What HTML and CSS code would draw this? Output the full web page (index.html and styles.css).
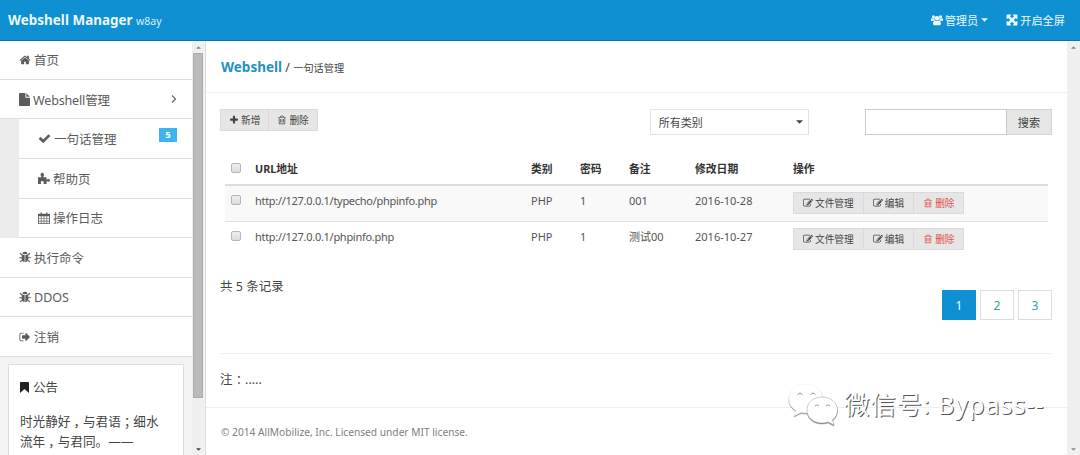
FILE: index.html
```html
<!DOCTYPE html>
<html lang="zh-CN">
<head>
<meta charset="utf-8">
<title>Webshell Manager</title>
<link rel="stylesheet" href="styles.css">
</head>
<body>
<svg class="defs" width="0" height="0">
<symbol id="home" viewBox="0 0 1792 1792"><path d="M1472 992v480q0 26-19 45t-45 19h-384v-384h-256v384h-384q-26 0-45-19t-19-45v-480q0-1 .5-3t.5-3l575-474 575 474q1 2 1 6zm223-69l-62 74q-8 9-21 11h-3q-13 0-21-7l-692-577-692 577q-12 8-24 7-13-2-21-11l-62-74q-8-10-7-23.5t11-21.5l719-599q32-26 76-26t76 26l244 204v-195q0-14 9-23t23-9h192q14 0 23 9t9 23v408l219 182q10 8 11 21.5t-7 23.5z"/></symbol>
<symbol id="check" viewBox="0 0 1792 1792"><path d="M1671 566q0 40-28 68l-724 724-136 136q-28 28-68 28t-68-28l-136-136-362-362q-28-28-28-68t28-68l136-136q28-28 68-28t68 28l294 295 656-657q28-28 68-28t68 28l136 136q28 28 28 68z"/></symbol>
<symbol id="plus" viewBox="0 0 1792 1792"><path d="M1600 736v192q0 40-28 68t-68 28h-416v416q0 40-28 68t-68 28h-192q-40 0-68-28t-28-68v-416h-416q-40 0-68-28t-28-68v-192q0-40 28-68t68-28h416v-416q0-40 28-68t68-28h192q40 0 68 28t28 68v416h416q40 0 68 28t28 68z"/></symbol>
<symbol id="trash" viewBox="0 0 1792 1792"><path d="M704 736v576q0 14-9 23t-23 9h-64q-14 0-23-9t-9-23v-576q0-14 9-23t23-9h64q14 0 23 9t9 23zm256 0v576q0 14-9 23t-23 9h-64q-14 0-23-9t-9-23v-576q0-14 9-23t23-9h64q14 0 23 9t9 23zm256 0v576q0 14-9 23t-23 9h-64q-14 0-23-9t-9-23v-576q0-14 9-23t23-9h64q14 0 23 9t9 23zm128 724v-948h-896v948q0 22 7 40.5t14.5 27 10.5 8.5h832q3 0 10.5-8.5t14.5-27 7-40.5zm-672-1076h448l-48-117q-7-9-17-11h-317q-10 2-17 11zm928 32v64q0 14-9 23t-23 9h-96v948q0 83-47 143.5t-113 60.5h-832q-66 0-113-58.5t-47-141.5v-952h-96q-14 0-23-9t-9-23v-64q0-14 9-23t23-9h309l70-167q15-37 54-63t79-26h320q40 0 79 26t54 63l70 167h309q14 0 23 9t9 23z"/></symbol>
<symbol id="edit" viewBox="0 0 1792 1792"><path d="M888 1184l116-116-152-152-116 116v56h96v96h56zm440-720q-16-16-33 1l-350 350q-17 17-1 33t33-1l350-350q17-17 1-33zm80 594v190q0 119-84.5 203.5t-203.5 84.5h-832q-119 0-203.5-84.5t-84.5-203.5v-832q0-119 84.5-203.5t203.5-84.5h832q63 0 117 25 15 7 18 23 3 17-9 29l-49 49q-14 14-32 8-23-6-45-6h-832q-66 0-113 47t-47 113v832q0 66 47 113t113 47h832q66 0 113-47t47-113v-126q0-13 9-22l64-64q15-15 35-7t20 29zm-96-738l288 288-672 672h-288v-288zm444 132l-92 92-288-288 92-92q28-28 68-28t68 28l152 152q28 28 28 68t-28 68z"/></symbol>
<symbol id="signout" viewBox="0 0 1792 1792"><path d="M704 1440q0 4 1 20t.5 26.5-3 23.5-10 19.5-20.5 6.5h-320q-119 0-203.5-84.5t-84.5-203.5v-704q0-119 84.5-203.5t203.5-84.5h320q13 0 22.5 9.5t9.5 22.5q0 4 1 20t.5 26.5-3 23.5-10 19.5-20.5 6.5h-320q-66 0-113 47t-47 113v704q0 66 47 113t113 47h312l11.5 1 11.5 3 8 5.5 7 9 2 13.5zm928-544q0 26-19 45l-544 544q-19 19-45 19t-45-19-19-45v-288h-448q-26 0-45-19t-19-45v-384q0-26 19-45t45-19h448v-288q0-26 19-45t45-19 45 19l544 544q19 19 19 45z"/></symbol>
<symbol id="file" viewBox="0 0 12 14"><path d="M1 0h6v4.2q0 .8.8.8H12v8.2q0 .8-.8.8H.8Q0 14 0 13.200V1Q0 0 1 0zM8 .2L11.800 4H8z"/></symbol>
<symbol id="puzzle" viewBox="0 0 14 14"><path d="M0 6h4.200Q3 4.800 3 3.200Q3 1 5 1t2 2.200Q7 4.800 6 6h4v3q.8-.8 2-.8 2 0 2 1.600t-2 1.600q-1.200 0-2-.8V14H6.500q-.2-1 .3-2Q6.500 10.500 5 10.500T3.200 12q.5 1 .3 2H0z"/></symbol>
<symbol id="calendar" viewBox="0 0 14 14"><path fill-rule="evenodd" d="M1 2h2V.5h1.500V2h5V.5H11V2h2q1 0 1 1v10q0 1-1 1H1q-1 0-1-1V3q0-1 1-1zM1 5v2.200h2.300V5zm3.100 0v2.200h2.500V5zm3.300 0v2.200h2.500V5zm3.300 0v2.200H13V5zM1 8v2.200h2.300V8zm3.100 0v2.200h2.500V8zm3.300 0v2.200h2.500V8zm3.300 0v2.200H13V8zM1 11v2h2.300v-2zm3.100 0v2h2.500v-2zm3.300 0v2h2.500v-2zm3.300 0v2H13v-2z"/></symbol>
<symbol id="bug" viewBox="0 0 14 14"><path d="M4 3.500Q4 .8 7 .8t3 2.700zM3.200 4.300h3.400v8.700q-3.400-.2-3.400-4.200zM7.400 4.300h3.400v4.500q0 4-3.400 4.200z"/><path d="M1.200 2.600l2.500 2.200M12.800 2.600l-2.500 2.200M.3 7.800h3.400M13.700 7.800h-3.400M1.400 12.800l2.500-2.500M12.600 12.800l-2.500-2.500" fill="none" stroke="currentColor" stroke-width="1.300"/></symbol>
<symbol id="bookmark" viewBox="0 0 10 12"><path d="M1 0h8q1 0 1 1v11L5 7.600 0 12V1q0-1 1-1z"/></symbol>
<symbol id="users" viewBox="0 0 15 14"><circle cx="3" cy="3" r="2"/><circle cx="12" cy="3" r="2"/><circle cx="7.500" cy="4.800" r="2.900"/><path d="M0 8.500V6.500Q0 4.500 1.500 4.700q1.500 1 3 .2Q4 7 5 8H1.500Q0 8.800 0 8.500zM15 8.500V6.500q0-2-1.500-1.800-1.500 1-3 .2Q11 7 10 8h3.500q1.500.8 1.500.5zM4.800 7.500q2.700 1.700 5.400 0Q12.500 8 12.500 11.500 12.500 13.500 10.700 13.500H4.300Q2.500 13.500 2.500 11.500 2.500 8 4.800 7.500z"/></symbol>
<symbol id="expand" viewBox="0 0 14 14"><path d="M1 1h4.800L4.300 2.500 7 5.200l2.700-2.700L8.200 1H13v4.800l-1.500-1.500L8.800 7l2.700 2.700L13 8.200V13H8.200l1.500-1.500L7 8.800l-2.700 2.700L5.800 13H1V8.200l1.500 1.500L5.200 7 2.500 4.300 1 5.800z" stroke="currentColor" stroke-width=".6"/></symbol>
<symbol id="up" viewBox="0 0 8 4"><path d="M0 4l4-4 4 4z"/></symbol>
<symbol id="down" viewBox="0 0 8 4"><path d="M0 0h8L4 4z"/></symbol>
</svg>

<header class="topbar">
  <div class="brand"><strong>Webshell Manager</strong> <small>w8ay</small></div>
  <nav class="top-links">
    <a class="top-link"><svg class="icon"><use href="#users"/></svg>管理员<svg class="caret"><use href="#down"/></svg></a>
    <a class="top-link"><svg class="icon"><use href="#expand"/></svg>开启全屏</a>
  </nav>
</header>

<div class="layout">
  <aside class="sidebar">
    <div class="side-content">
      <ul class="menu">
        <li class="item"><svg class="icon"><use href="#home"/></svg>首页</li>
        <li class="item item-open"><svg class="icon file"><use href="#file"/></svg>Webshell管理<svg class="chevron" viewBox="0 0 6 8"><path d="M1 .5L4.500 4 1 7.500"/></svg></li>
        <li class="item sub"><svg class="icon wide"><use href="#check"/></svg>一句话管理<span class="badge">5</span></li>
        <li class="item sub"><svg class="icon"><use href="#puzzle"/></svg>帮助页</li>
        <li class="item sub"><svg class="icon"><use href="#calendar"/></svg>操作日志</li>
        <li class="item"><svg class="icon"><use href="#bug"/></svg>执行命令</li>
        <li class="item"><svg class="icon"><use href="#bug"/></svg>DDOS</li>
        <li class="item"><svg class="icon"><use href="#signout"/></svg>注销</li>
      </ul>
      <section class="notice">
        <h2 class="notice-title"><svg class="mark"><use href="#bookmark"/></svg>公告</h2>
        <p class="notice-text">时光静好<span class="punct">，</span>与君语<span class="punct">；</span>细水<br>流年<span class="punct">，</span>与君同。——</p>
      </section>
    </div>
    <div class="scroll side-scroll"><svg class="arrow"><use href="#up"/></svg><div class="thumb"></div><svg class="arrow dark"><use href="#down"/></svg></div>
  </aside>

  <main class="main">
    <div class="title"><strong>Webshell</strong> / <small>一句话管理</small></div>
    <div class="tools">
      <div class="group"><button class="btn"><svg class="bi"><use href="#plus"/></svg>新增</button><button class="btn"><svg class="bi"><use href="#trash"/></svg>删除</button></div>
      <div class="select">所有类别<svg class="caret"><use href="#down"/></svg></div>
      <div class="search"><input class="search-input" type="text"><button class="search-btn">搜索</button></div>
    </div>
    <table class="table">
      <colgroup><col class="c1"><col class="c2"><col class="c3"><col class="c4"><col class="c5"><col class="c6"><col></colgroup>
      <thead>
        <tr><th><input class="cb" type="checkbox"></th><th>URL地址</th><th>类别</th><th>密码</th><th>备注</th><th>修改日期</th><th>操作</th></tr>
      </thead>
      <tbody>
        <tr class="odd"><td><input class="cb" type="checkbox"></td><td class="url">http://127.0.0.1/typecho/phpinfo.php</td><td>PHP</td><td>1</td><td>001</td><td>2016-10-28</td>
          <td class="ops"><div class="group"><button class="btn"><svg class="bi"><use href="#edit"/></svg>文件管理</button><button class="btn"><svg class="bi"><use href="#edit"/></svg>编辑</button><button class="btn danger"><svg class="bi"><use href="#trash"/></svg>删除</button></div></td></tr>
        <tr class="even"><td><input class="cb" type="checkbox"></td><td class="url">http://127.0.0.1/phpinfo.php</td><td>PHP</td><td>1</td><td>测试00</td><td>2016-10-27</td>
          <td class="ops"><div class="group"><button class="btn"><svg class="bi"><use href="#edit"/></svg>文件管理</button><button class="btn"><svg class="bi"><use href="#edit"/></svg>编辑</button><button class="btn danger"><svg class="bi"><use href="#trash"/></svg>删除</button></div></td></tr>
      </tbody>
    </table>
    <div class="summary">
      <span>共 5 条记录</span>
      <div class="pages"><a class="page active">1</a><a class="page">2</a><a class="page">3</a></div>
    </div>
    <div class="note">注<span class="punct">：</span>.....</div>
    <footer class="footer">© 2014 AllMobilize, Inc. Licensed under MIT license.</footer>
  </main>
  <div class="scroll main-scroll"><svg class="arrow"><use href="#up"/></svg><svg class="arrow"><use href="#down"/></svg></div>
</div>

<div class="watermark">
  <svg class="wechat" viewBox="0 0 52 44">
    <g class="bubble"><path d="M18 2C8 2 1 8.500 1 17c0 5 2.500 9 7 11.500L6 34l7-3.500c9 2 22-2 22-14C35 8 27 2 18 2z"/><path class="front" d="M34 15c-9 0-15 5.500-15 13s6 13 15 13c2 0 4-.3 6-1l6 3-1.500-5c3-2.500 5-6 5-10 0-7.500-7-13-15.500-13z"/></g>
    <path class="eye" d="M9.500 12.500q2.500-3 5 0M22.500 12.500q2.500-3 5 0M27 24q2-2.500 4 0M38 24q2-2.500 4 0"/>
  </svg>
  <span class="wm-text">微信号: Bypass--</span>
</div>
</body>
</html>
```
FILE: styles.css
```css
* { box-sizing: border-box; }
body {
  margin: 0;
  height: 455px;
  overflow: hidden;
  font-family: "Noto Sans", "Noto Sans CJK SC", sans-serif;
  font-size: 13px;
  color: #444;
  background: #fff;
}
svg { fill: currentColor; flex: none; }
.defs { display: block; }
button, input { font-family: inherit; margin: 0; border-radius: 0; }

.topbar {
  height: 41px;
  padding: 0 15px 1px 8px;
  display: flex;
  justify-content: space-between;
  align-items: center;
  background: #0e90d2;
  border-bottom: 1px solid #0b76ac;
  color: #fff;
}
.brand { font-size: 13px; white-space: nowrap; }
.brand strong { color: #eef8fd; font-size: 13.400px; letter-spacing: 0.050px; }
.brand small { font-size: 10.500px; color: #d9effa; }
.top-links { display: flex; gap: 18px; font-size: 11.200px; color: #eef8fd; }
.top-link { display: flex; align-items: center; white-space: nowrap; }
.top-link .icon { width: 12px; height: 12px; margin-right: 2px; }
.caret { width: 7px; height: 4px; }
.top-link .caret { margin-left: 3px; }

.layout { display: flex; height: 414px; }
.sidebar {
  width: 206px;
  display: flex;
  background: #f3f3f3;
  border-right: 1px solid #dcdcdc;
}
.side-content { width: 192px; overflow: hidden; }
.menu {
  list-style: none;
  margin: 0;
  padding: 0;
  background: #ececec;
  color: #5c5c5c;
}
.item {
  height: 39.600px;
  padding-left: 19px;
  display: flex;
  align-items: center;
  background: #fff;
  border-bottom: 1px solid #dedede;
  font-size: 12.500px;
  white-space: nowrap;
}
.item:first-child { height: 38.800px; }
.item .icon { width: 12px; height: 12px; margin-right: 3px; }
.item .icon.file { width: 11px; height: 13px; }
.item .icon.wide { width: 13px; height: 13px; margin-right: 3px; }
.item-open { letter-spacing: -0.150px; }
.item.sub { margin-left: 19px; }
.chevron {
  width: 6px;
  height: 8px;
  margin: 0 15px 0 auto;
  fill: none;
  stroke: #666;
  stroke-width: 1.200;
}
.badge {
  width: 18px;
  height: 14px;
  margin: -7px 15px 0 auto;
  background: #3bb4f2;
  color: #fff;
  font-size: 9.500px;
  font-weight: bold;
  line-height: 14px;
  text-align: center;
}
.notice {
  margin: 7px 8px 0;
  height: 140px;
  padding: 13px 12px 0 11px;
  background: #fff;
  border: 1px solid #dedede;
}
.notice-title {
  display: flex;
  align-items: center;
  margin: 0 0 14px;
  font-size: 12.500px;
  font-weight: normal;
  line-height: 20px;
}
.mark { width: 9px; height: 11px; margin-right: 4px; color: #222; }
.notice-text { margin: 0; font-size: 12.600px; line-height: 20px; white-space: nowrap; }
.punct { margin: 0 0.250em; font-feature-settings: "halt"; }

.scroll {
  display: flex;
  flex-direction: column;
  align-items: center;
  justify-content: space-between;
  padding: 5px 0 4px;
  background: #f0f0f0;
}
.side-scroll { width: 12px; justify-content: flex-start; }
.thumb {
  width: 10px;
  height: 345px;
  margin: 4px 0 auto;
  background: #bbb;
  border: 1px solid #adadad;
}
.arrow { width: 5px; height: 3px; color: #8a8a8a; }
.arrow.dark { color: #444; }
.main-scroll { width: 13px; }

.main { width: 861px; background: #fff; }
.title {
  height: 52px;
  padding: 0 15px;
  border-bottom: 1px solid #eee;
  font-size: 12.500px;
  line-height: 53px;
}
.title strong { font-size: 13.500px; color: #258fc4; }
.title small { font-size: 10.200px; }

.tools { display: flex; height: 43px; padding: 16px 15px 0 14px; align-items: flex-start; }
.group { display: inline-flex; }
.btn {
  height: 22px;
  padding: 0 9px;
  display: flex;
  align-items: center;
  border: 1px solid #dadada;
  background: #e6e6e6;
  color: #444;
  font-size: 9.700px;
  white-space: nowrap;
}
.tools .btn { padding: 0 8px; }
.btn + .btn { margin-left: -1px; border-left-color: #d9d9d9; }
.bi { width: 10px; height: 10px; margin-right: 2px; }
.btn.danger { padding-right: 8px; color: #dd514c; }
.select {
  width: 159px;
  height: 26px;
  margin-left: 332px;
  padding: 0 5px 0 8px;
  display: flex;
  align-items: center;
  justify-content: space-between;
  border: 1px solid #e3e3e3;
  font-size: 11px;
}
.search { display: flex; width: 187px; margin-left: auto; }
.search-input { width: 142px; height: 26px; border: 1px solid #ccc; background: #fff; }
.search-btn {
  width: 45px;
  height: 26px;
  padding: 0;
  border: 1px solid #d4d4d4;
  border-left: 0;
  background: #e6e6e6;
  color: #444;
  font-size: 11.200px;
}

.table {
  width: 823px;
  margin: 17px 0 0 19px;
  border-collapse: separate;
  border-spacing: 0;
  table-layout: fixed;
  font-size: 11px;
}
.c1 { width: 25px; }
.c2 { width: 276px; }
.c3 { width: 49px; }
.c4 { width: 49px; }
.c5 { width: 66px; }
.c6 { width: 98px; }
th, td {
  padding: 0 0 0 5px;
  text-align: left;
  vertical-align: middle;
  line-height: 16px;
  white-space: nowrap;
}
th { height: 33px; border-bottom: 2px solid #ddd; font-size: 10.800px; color: #333; }
td { height: 36px; padding-bottom: 5px; color: #555; }
.url { letter-spacing: -0.290px; }
.odd td { background: #f9f9f9; border-bottom: 1px solid #e2e2e2; }
.even td { padding-bottom: 7px; }
td.ops { padding: 0 0 1px 5px; }
.even td.ops { padding-bottom: 2px; }
.ops .group { display: flex; }
.cb {
  appearance: none;
  display: block;
  width: 10px;
  height: 10px;
  margin: 0 0 2px 1px;
  border: 1px solid #b5b5b5;
  border-radius: 2px;
  background: linear-gradient(#eee, #ddd);
}

.summary {
  height: 96px;
  margin: 0 15px 0 14px;
  padding-top: 19px;
  display: flex;
  justify-content: space-between;
  border-bottom: 1px solid #eee;
  font-size: 12.500px;
  line-height: 20px;
}
.pages { display: flex; gap: 4px; padding-top: 13px; }
.page {
  width: 34px;
  height: 30px;
  border: 1px solid #ddd;
  color: #3e9c9c;
  font-size: 12px;
  line-height: 30px;
  text-align: center;
}
.page.active { background: #0e90d2; border-color: #0e90d2; color: #fff; }
.note { height: 53px; padding: 16px 14px 0; font-size: 12.500px; line-height: 20px; }
.footer {
  height: 49px;
  padding-left: 15px;
  border-top: 1px solid #eee;
  color: #808080;
  font-size: 10.200px;
  line-height: 49px;
}

.watermark {
  position: absolute;
  left: 788px;
  top: 382px;
  display: flex;
  align-items: center;
  gap: 4px;
}
.wechat { width: 52px; height: 44px; filter: drop-shadow(0.500px 1px 0.500px #888); }
.bubble { fill: #fff; stroke: #eee; stroke-width: 0.500; }
.front { stroke: #999; }
.eye { fill: none; stroke: #999; stroke-width: 1; }
.wm-text {
  color: #fff;
  font-size: 25.500px;
  letter-spacing: 0.750px;
  line-height: 44px;
  white-space: nowrap;
  text-shadow: 1px 1px 0.500px #555;
}
```
